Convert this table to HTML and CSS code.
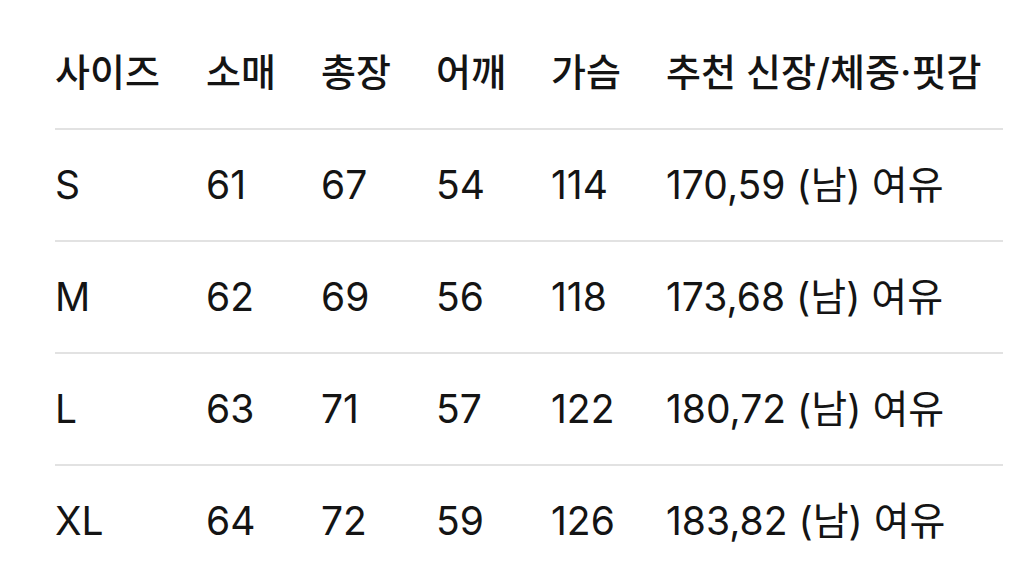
FILE: index.html
```html
<!DOCTYPE html>
<html lang="ko">
<head>
<meta charset="utf-8">
<link rel="stylesheet" href="styles.css">
</head>
<body>
<div class="size-table">
  <div class="row head">
    <div>사이즈</div><div>소매</div><div>총장</div><div>어깨</div><div>가슴</div><div>추천 신장/체중·핏감</div>
  </div>
  <div class="row">
    <div>S</div><div>61</div><div>67</div><div>54</div><div>114</div><div>170,59 (남) 여유</div>
  </div>
  <div class="row">
    <div>M</div><div>62</div><div>69</div><div>56</div><div>118</div><div>173,68 (남) 여유</div>
  </div>
  <div class="row">
    <div>L</div><div>63</div><div>71</div><div>57</div><div>122</div><div>180,72 (남) 여유</div>
  </div>
  <div class="row">
    <div>XL</div><div>64</div><div>72</div><div>59</div><div>126</div><div>183,82 (남) 여유</div>
  </div>
</div>
</body>
</html>
```
FILE: styles.css
```css
html, body {
  margin: 0;
  padding: 0;
  background: #ffffff;
}
body {
  font-family: "Inter", "Noto Sans CJK KR", sans-serif;
  color: #141414;
}
.size-table {
  margin: 16px 0 0 55px;
  width: 948px;
}
.row {
  display: grid;
  grid-template-columns: 151px 115px 115px 115px 115px 1fr;
  align-items: center;
  box-sizing: border-box;
  height: 112px;
  font-size: 39px;
  line-height: 48px;
  white-space: nowrap;
}
.row + .row {
  border-top: 2px solid #e2e2e2;
}
.head {
  font-weight: 500;
  font-size: 38px;
}
```
